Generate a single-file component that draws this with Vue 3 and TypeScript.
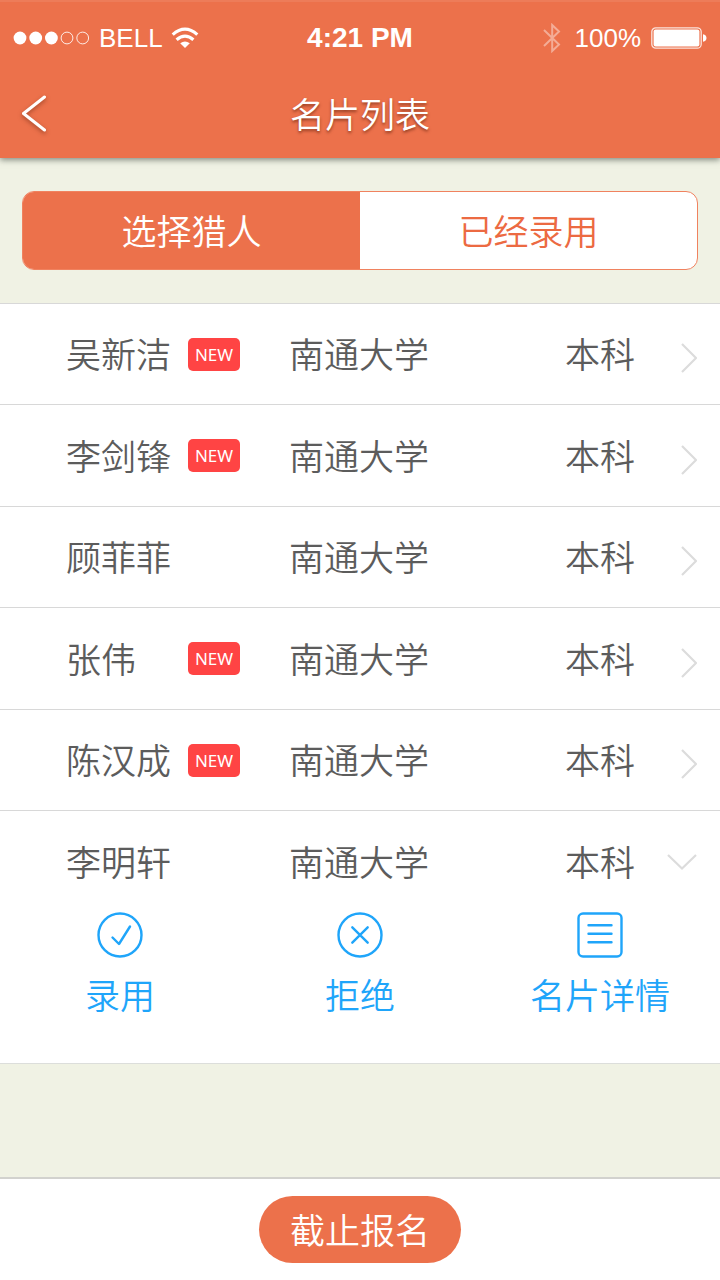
<script setup lang="ts">
import { ref } from 'vue'

interface Person {
  name: string
  school: string
  degree: string
  isNew: boolean
}

const people: Person[] = [
  { name: '吴新洁', school: '南通大学', degree: '本科', isNew: true },
  { name: '李剑锋', school: '南通大学', degree: '本科', isNew: true },
  { name: '顾菲菲', school: '南通大学', degree: '本科', isNew: false },
  { name: '张伟', school: '南通大学', degree: '本科', isNew: true },
  { name: '陈汉成', school: '南通大学', degree: '本科', isNew: true },
  { name: '李明轩', school: '南通大学', degree: '本科', isNew: false },
]

const tabs = ['选择猎人', '已经录用']
const activeTab = ref(0)
const openRow = ref(5)

function toggle(index: number): void {
  openRow.value = openRow.value === index ? -1 : index
}
</script>

<template>
  <div class="page">
    <header class="header">
      <div class="status">
        <div class="status-left">
          <svg class="signal" width="78" height="14" viewBox="0 0 78 14">
            <circle cx="7" cy="7" r="6.4" fill="#fff" />
            <circle cx="22.7" cy="7" r="6.4" fill="#fff" />
            <circle cx="38.4" cy="7" r="6.4" fill="#fff" />
            <circle cx="54" cy="7" r="5.9" fill="none" stroke="#fff" stroke-opacity="0.85" />
            <circle cx="69.7" cy="7" r="5.9" fill="none" stroke="#fff" stroke-opacity="0.85" />
          </svg>
          <span>BELL</span>
          <svg class="wifi" width="28" height="22" viewBox="0 0 28 22">
            <path d="M14 21 L9.2 16.2 Q14 12.6 18.8 16.2 Z" fill="#fff" />
            <path d="M5.6 12.7 Q14 5.6 22.4 12.7" fill="none" stroke="#fff" stroke-width="3.2" />
            <path d="M1.7 7.6 Q14 -3.4 26.3 7.6" fill="none" stroke="#fff" stroke-width="3.2" />
          </svg>
        </div>
        <span class="time">4:21 PM</span>
        <div class="status-right">
          <svg width="18" height="30" viewBox="0 0 18 30">
            <path d="M1 7 L16 21.5 L9.2 28 V2 L16 8.5 L1 23" fill="none" stroke="#fff" stroke-opacity="0.42" stroke-width="2" />
          </svg>
          <span class="percent">100%</span>
          <svg width="56" height="22" viewBox="0 0 56 22">
            <rect x="0.8" y="0.8" width="49.4" height="20.4" rx="4" fill="none" stroke="#fff" stroke-opacity="0.8" stroke-width="1.3" />
            <rect x="2.6" y="2.6" width="45.8" height="16.8" rx="2" fill="#fff" />
            <path d="M52 7.2 Q55.5 8 55.5 11 Q55.5 14 52 14.8 Z" fill="#fff" />
          </svg>
        </div>
      </div>
      <div class="nav">
        <button class="back" type="button" aria-label="返回">
          <svg width="26" height="38" viewBox="0 0 26 38">
            <path d="M23.5 2 L2.5 18.5 L23.5 35" fill="none" stroke="#fff" stroke-width="3" stroke-linecap="round" stroke-linejoin="round" />
          </svg>
        </button>
        <h1>名片列表</h1>
      </div>
    </header>

    <main class="main">
      <div class="tabs">
        <button
          v-for="(tab, i) in tabs"
          :key="tab"
          type="button"
          :class="{ active: activeTab === i }"
          :aria-pressed="activeTab === i"
          @click="activeTab = i"
        >{{ tab }}</button>
      </div>

      <ul class="list">
        <li v-for="(p, i) in people" :key="p.name">
          <button class="row" type="button" :aria-expanded="openRow === i" @click="toggle(i)">
            <span class="name">{{ p.name }}</span>
            <span class="flag"><span v-if="p.isNew" class="badge">NEW</span></span>
            <span class="school">{{ p.school }}</span>
            <span class="degree">{{ p.degree }}</span>
            <svg v-if="openRow === i" class="arrow" width="30" height="30" viewBox="0 0 30 30">
              <path d="M1 4 L15 17.5 L29 4" fill="none" stroke="#dcdcdc" stroke-width="2.2" />
            </svg>
            <svg v-else class="arrow" width="16" height="30" viewBox="0 0 16 30">
              <path d="M1 1 L15 15 L1 29" fill="none" stroke="#dcdcdc" stroke-width="2.2" />
            </svg>
          </button>
          <div v-if="openRow === i" class="actions">
            <button type="button">
              <svg width="46" height="46" viewBox="0 0 46 46">
                <circle cx="23" cy="23" r="21.5" />
                <path d="M15.5 25.5 L22 32 L33 14.5" stroke-width="2.4" />
              </svg>
              <span>录用</span>
            </button>
            <button type="button">
              <svg width="46" height="46" viewBox="0 0 46 46">
                <circle cx="23" cy="23" r="21.5" />
                <path d="M15.3 15.3 L30.7 30.7 M30.7 15.3 L15.3 30.7" stroke-width="2.4" />
              </svg>
              <span>拒绝</span>
            </button>
            <button type="button">
              <svg width="46" height="46" viewBox="0 0 46 46">
                <rect x="1.5" y="1.5" width="43" height="43" rx="4.5" />
                <path d="M11.5 13.3 H34.5 M11.5 21.8 H34.5 M11.5 30.2 H34.5" stroke-width="2.4" />
              </svg>
              <span>名片详情</span>
            </button>
          </div>
        </li>
      </ul>
    </main>

    <footer class="footer">
      <button type="button">截止报名</button>
    </footer>
  </div>
</template>

<style>
body {
  margin: 0;
  background: #fff;
}
</style>

<style scoped>
.page {
  display: flex;
  flex-direction: column;
  min-height: 100vh;
  background: #f0f2e4;
  color: #5c5c5c;
  font-family: "Noto Sans CJK SC", sans-serif;
  font-size: 35px;
  font-weight: 350;
  line-height: 50px;
}

button {
  margin: 0;
  padding: 0;
  border: 0;
  background: none;
  color: inherit;
  font: inherit;
  cursor: pointer;
}

svg {
  display: block;
  flex: none;
}

.header {
  position: relative;
  background: #ec714b;
  color: #fff;
  box-shadow: 0 2px 6px rgba(60, 70, 60, 0.6), inset 0 2px 0 rgba(255, 255, 255, 0.08);
}

.status {
  display: grid;
  grid-template-columns: 1fr auto 1fr;
  align-items: center;
  height: 76px;
  padding: 0 13px;
  font-family: "Liberation Sans", Arial, sans-serif;
  font-size: 26px;
  font-weight: 400;
  line-height: 30px;
}

.status-left,
.status-right {
  display: flex;
  align-items: center;
}

.status-left {
  gap: 8px;
}

.status-right {
  justify-content: flex-end;
  gap: 10px;
}

.percent {
  padding-left: 4px;
}

.time {
  font-size: 28px;
  font-weight: 700;
}

.nav {
  display: grid;
  grid-template-columns: 60px 1fr 60px;
  align-items: center;
  height: 76px;
  padding-bottom: 6px;
}

.back {
  display: flex;
  padding-left: 21px;
  filter: drop-shadow(0 2px 2px rgba(90, 30, 10, 0.5));
}

h1 {
  margin: 0;
  padding-bottom: 2px;
  font-size: 35px;
  font-weight: 350;
  line-height: 50px;
  text-align: center;
  text-shadow: 0 2px 3px rgba(90, 30, 10, 0.6);
}

.main {
  flex: 1;
}

.tabs {
  display: grid;
  grid-template-columns: 1fr 1fr;
  height: 77px;
  margin: 33px 22px;
  overflow: hidden;
  border: 1px solid #f0825f;
  border-radius: 12px;
  background: #fff;
  color: #ec6a42;
}

.tabs button {
  padding-bottom: 2px;
}

.tabs .active {
  background: #ec714b;
  color: #fff;
}

.list {
  margin: 0;
  padding: 0;
  list-style: none;
  border-bottom: 1px solid #dcdedb;
  background: #fff;
}

.list li {
  border-top: 1px solid #d8d8d8;
}

.list li:nth-child(even) .row {
  height: 101px;
}

.row {
  display: grid;
  grid-template-columns: 121px 102px 1fr 86px 46px;
  align-items: center;
  width: 100%;
  height: 100px;
  padding: 0 23px 0 66px;
  text-align: left;
}

.row > span {
  padding-bottom: 2px;
  white-space: nowrap;
}

.row > .flag {
  padding: 0 0 0 1px;
}

.badge {
  display: block;
  width: 52px;
  height: 33px;
  border-radius: 5px;
  background: #ff4444;
  color: #fff;
  font-family: "Noto Sans", "Open Sans", sans-serif;
  font-size: 17px;
  font-weight: 400;
  line-height: 33px;
  text-align: center;
}

.arrow {
  justify-self: end;
  margin-top: 8px;
}

.actions {
  display: grid;
  grid-template-columns: repeat(3, 1fr);
  padding-bottom: 44px;
  color: #1fa5fa;
}

.actions button {
  display: flex;
  flex-direction: column;
  align-items: center;
  gap: 11px;
}

.actions svg {
  fill: none;
  stroke: currentColor;
  stroke-width: 2.4;
  stroke-linecap: round;
  stroke-linejoin: round;
}

.footer {
  display: flex;
  justify-content: center;
  padding: 17px 0;
  border-top: 2px solid #d2d2ce;
  background: #fff;
}

.footer button {
  height: 67px;
  padding: 0 31px 2px;
  border-radius: 34px;
  background: #ec714b;
  color: #fff;
}
</style>
